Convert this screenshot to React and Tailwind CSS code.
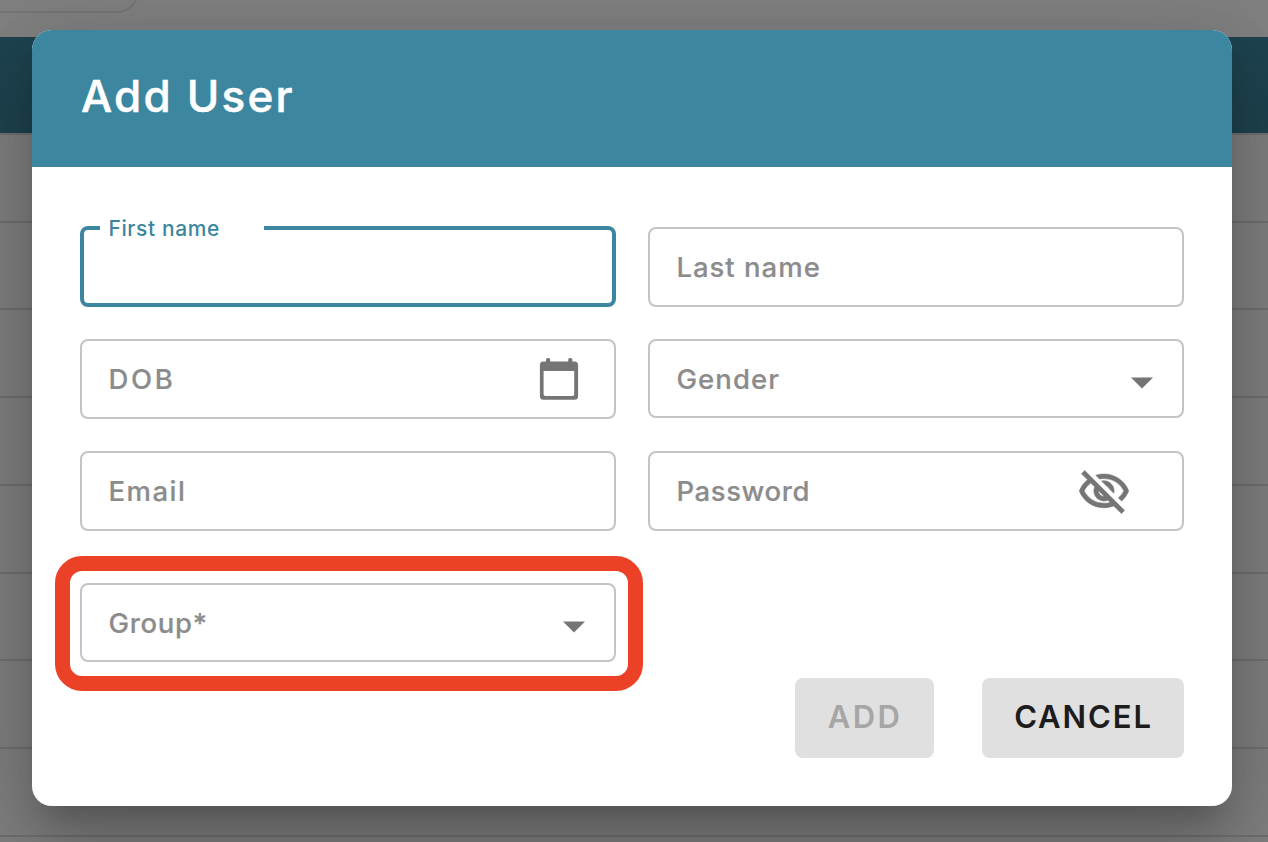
import React from "react";
import { MdOutlineVisibilityOff } from "react-icons/md";

function Caret() {
  return (
    <svg className="mt-[9px] mr-[29px] h-[12px] w-[22px] shrink-0" viewBox="0 0 22 12" fill="#757575">
      <path d="M0 0.4H22L11 11.6Z" />
    </svg>
  );
}

function CalendarIcon() {
  return (
    <svg className="mr-[35px] h-[42px] w-[40px] shrink-0" viewBox="0 0 40 42" fill="#757575">
      <rect x="7" y="0" width="4.2" height="8" rx="1.8" />
      <rect x="29.2" y="0" width="4.2" height="8" rx="1.8" />
      <path
        fillRule="evenodd"
        d="M4.5 3.5H35.5A3.6 3.6 0 0 1 39.1 7.1V38.2A3.6 3.6 0 0 1 35.5 41.8H4.5A3.6 3.6 0 0 1 0.9 38.2V7.1A3.6 3.6 0 0 1 4.5 3.5ZM4.6 13V36.2A1.8 1.8 0 0 0 6.4 38H33.4A1.8 1.8 0 0 0 35.2 36.2V13Z"
      />
    </svg>
  );
}

function Field({ label, spacing, height = "h-[80px]", children }) {
  return (
    <div className={`flex w-[536px] items-center justify-between rounded-[8px] border-2 border-[#c4c4c4] ${height}`}>
      <span className={`pl-[26.4px] text-[27.5px] leading-[34px] font-medium text-[#8c8c8c] [-webkit-text-stroke:0.2px_#8c8c8c] ${spacing}`}>
        {label}
      </span>
      {children}
    </div>
  );
}

const rows = ["h-[88px]", "h-[87px]", "h-[88px]", "h-[88px]", "h-[88px]", "h-[87px]", "h-[88px]", "h-[88px]", "h-[88px]"];

function Backdrop() {
  return (
    <div className="absolute inset-0 overflow-hidden bg-[#808080]">
      <div className="h-[37px] overflow-hidden">
        <div className="-mt-[27px] h-[40px] w-[139px] rounded-br-[22px] border-r-2 border-b-2 border-[#757575]" />
      </div>
      <div className="h-[96px] bg-[#1e4350]" />
      {rows.map((h, i) => (
        <div key={i} className={`border-t-2 border-[#707070] ${h}`} />
      ))}
    </div>
  );
}

export default function App() {
  return (
    <div className="relative h-[842px] w-[1268px] overflow-hidden pt-[30px] pl-[32px] font-['Inter',sans-serif]">
      <Backdrop />
      <div className="relative h-[776px] w-[1200px] rounded-[20px] shadow-[0_22px_30px_-14px_rgba(0,0,0,0.2),0_48px_76px_6px_rgba(0,0,0,0.14),0_18px_92px_16px_rgba(0,0,0,0.12)]">
        <div className="flex h-full flex-col overflow-hidden rounded-[20px] bg-white">
          <header className="flex h-[137px] shrink-0 items-center bg-[#3c869f] pl-[49px]">
            <h1 className="pb-[6px] text-[44px] leading-[52px] font-medium tracking-[2.2px] text-white [-webkit-text-stroke:0.5px_white]">
              Add User
            </h1>
          </header>
          <div className="flex flex-col px-[48px] pt-[59px]">
            <div className="flex items-end gap-[32px]">
              <div className="relative h-[81px] w-[536px] rounded-[8px] border-4 border-[#3c869f]">
                <span className="absolute -top-[15px] left-[16px] w-[164px] bg-white pl-[8.5px] text-[21px] leading-[27px] font-medium tracking-[0.6px] text-[#3c869f]">
                  First name
                </span>
              </div>
              <Field label="Last name" spacing="tracking-[1px]" />
            </div>
            <div className="mt-[32px] flex items-start gap-[32px]">
              <Field label="DOB" spacing="tracking-[2.7px]">
                <CalendarIcon />
              </Field>
              <Field label="Gender" spacing="tracking-[1.1px]" height="h-[79px]">
                <Caret />
              </Field>
            </div>
            <div className="mt-[32px] flex gap-[32px]">
              <Field label="Email" spacing="tracking-[1.5px]" />
              <Field label="Password" spacing="tracking-[0.6px]">
                <MdOutlineVisibilityOff className="mt-[1px] mr-[51px] h-[54px] w-[54px] shrink-0 text-[#757575] [&>path:last-child]:stroke-[0.25px]" />
              </Field>
            </div>
            <div className="relative mt-[52px] w-[536px]">
              <Field label="Group*" spacing="tracking-[0.7px]" height="h-[79px]">
                <Caret />
              </Field>
              <div className="absolute -top-[27px] -right-[27px] -bottom-[29px] -left-[25px] rounded-[27px] border-[15px] border-[#eb4127]" />
            </div>
            <div className="mt-[16px] flex justify-end gap-[48px]">
              <button className="flex h-[80px] w-[139px] items-center justify-center rounded-[8px] bg-[#e0e0e0] pb-[2px] pl-[1px] text-[31px] font-semibold tracking-[2.4px] text-[#a6a6a6]">
                ADD
              </button>
              <button className="flex h-[80px] w-[202px] items-center justify-center rounded-[8px] bg-[#e0e0e0] pb-[2px] pl-[1px] text-[31px] font-semibold tracking-[1.9px] text-[#1c1c1c]">
                CANCEL
              </button>
            </div>
          </div>
        </div>
      </div>
    </div>
  );
}
